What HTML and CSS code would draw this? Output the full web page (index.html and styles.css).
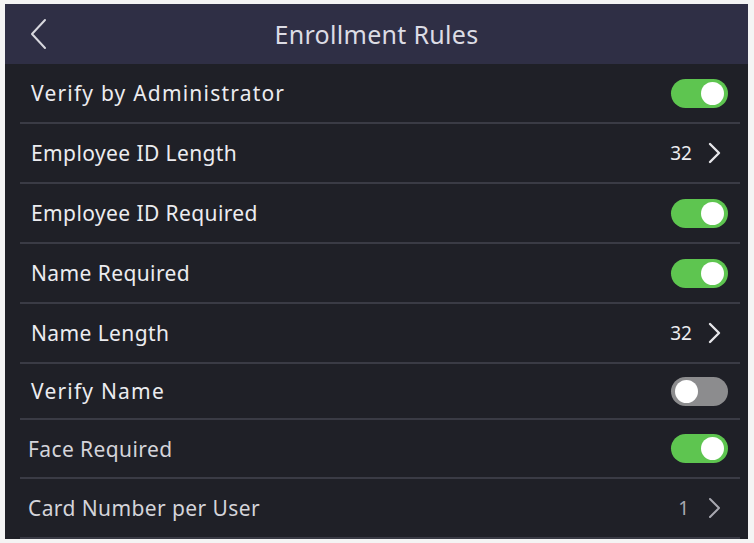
FILE: index.html
```html
<!DOCTYPE html>
<html lang="en">
<head>
  <meta charset="UTF-8" />
  <meta name="viewport" content="width=device-width, initial-scale=1.0"/>
  <title>Enrollment Rules</title>
  <link rel="stylesheet" href="styles.css">
</head>
<body>
  <div class="screen">
    <div class="header">
      <svg class="back" width="20" height="32" viewBox="0 0 20 32">
        <path d="M16 2 L3 16 L16 30" fill="none" stroke="#d8d8de" stroke-width="2" stroke-linecap="round" stroke-linejoin="round"/>
      </svg>
      <h1>Enrollment Rules</h1>
    </div>

    <div class="list">
      <div class="row">
        <span class="label wide">Verify by Administrator</span>
        <span class="toggle on"></span>
      </div>
      <div class="row">
        <span class="label">Employee ID Length</span>
        <span class="value">32 <svg class="chev" width="15" height="22" viewBox="0 0 15 22"><path d="M3 2 L12 11 L3 20" fill="none" stroke="#e6e6ea" stroke-width="2.4" stroke-linecap="round" stroke-linejoin="round"/></svg></span>
      </div>
      <div class="row">
        <span class="label">Employee ID Required</span>
        <span class="toggle on"></span>
      </div>
      <div class="row">
        <span class="label">Name Required</span>
        <span class="toggle on"></span>
      </div>
      <div class="row">
        <span class="label">Name Length</span>
        <span class="value">32 <svg class="chev" width="15" height="22" viewBox="0 0 15 22"><path d="M3 2 L12 11 L3 20" fill="none" stroke="#e6e6ea" stroke-width="2.4" stroke-linecap="round" stroke-linejoin="round"/></svg></span>
      </div>
      <div class="row short">
        <span class="label wide">Verify Name</span>
        <span class="toggle"></span>
      </div>
      <div class="row mid shift">
        <span class="label dim">Face Required</span>
        <span class="toggle on"></span>
      </div>
      <div class="row shift">
        <span class="label dim">Card Number per User</span>
        <span class="value dim">1 <svg class="chev" width="15" height="22" viewBox="0 0 15 22"><path d="M3 2 L12 11 L3 20" fill="none" stroke="#a8a8b0" stroke-width="2" stroke-linecap="round" stroke-linejoin="round"/></svg></span>
      </div>
    </div>
  </div>
</body>
</html>
```

FILE: styles.css
```css
* {
  box-sizing: border-box;
  font-family: 'Noto Sans', 'Open Sans', sans-serif;
}

body {
  margin: 0;
  padding: 4px 6px 4px 5px;
  background: #f4f4f4;
}

.screen {
  height: 535px;
  background: #1f2027;
  color: #ececf0;
  overflow: hidden;
}

.header {
  height: 60px;
  background: #2f2f45;
  display: flex;
  align-items: center;
  justify-content: center;
  position: relative;
}

.back {
  position: absolute;
  left: 24px;
  top: 14px;
}

h1 {
  margin: 0;
  font-size: 25px;
  font-weight: 400;
  color: #dcdce4;
  letter-spacing: 0.3px;
}

.list {
  padding: 0 8px 0 15px;
}

.row {
  height: 60px;
  display: flex;
  align-items: center;
  justify-content: space-between;
  padding: 0 12px 0 11px;
  border-bottom: 2px solid #3a3b45;
}

.row.short {
  height: 56px;
}

.row.mid {
  height: 59px;
}

.row.shift {
  padding-left: 8px;
}

.label {
  font-size: 21px;
  letter-spacing: 0.4px;
}

.label.wide {
  letter-spacing: 1.2px;
}

.dim {
  color: #d4d4da;
}

.value {
  display: flex;
  align-items: center;
  gap: 15px;
  font-size: 19px;
  margin-right: 6px;
}

.value.dim {
  color: #a8a8b0;
  gap: 18px;
}

.toggle {
  width: 57px;
  height: 29px;
  border-radius: 15px;
  background: #8c8c8e;
  position: relative;
}

.toggle::after {
  content: "";
  position: absolute;
  top: 3px;
  left: 4px;
  width: 23px;
  height: 23px;
  border-radius: 50%;
  background: #ffffff;
}

.toggle.on {
  background: #5ec550;
}

.toggle.on::after {
  left: auto;
  right: 4px;
}
```
